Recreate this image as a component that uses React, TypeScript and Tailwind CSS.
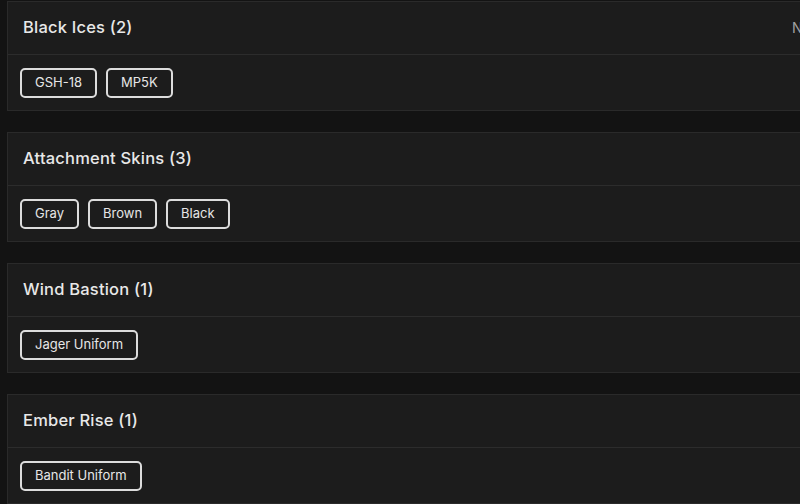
import React from "react";

type Group = {
  title: string;
  items: string[];
  note?: string;
};

const groups: Group[] = [
  { title: "Black Ices (2)", items: ["GSH-18", "MP5K"], note: "Not owned" },
  { title: "Attachment Skins (3)", items: ["Gray", "Brown", "Black"] },
  { title: "Wind Bastion (1)", items: ["Jager Uniform"] },
  { title: "Ember Rise (1)", items: ["Bandit Uniform"] },
];

function GroupCard({ group }: { group: Group }) {
  return (
    <section className="w-[900px] bg-[#1c1c1c] border border-[#2a2a2a]">
      {/* Header */}
      <div className="flex items-center h-[53px] pl-[15px] pr-4 pb-[1px] border-b border-[#2c2c2c]">
        <h3 className="flex-1 text-[16.5px] font-medium text-[#e8e8e8] tracking-[0.2px]">
          {group.title}
        </h3>
        {group.note && (
          <span className="w-[98px] text-[14px] text-[#a0a0a0]">{group.note}</span>
        )}
      </div>

      {/* Items */}
      <div className="flex items-center gap-[9px] h-[55px] px-3">
        {group.items.map((item) => (
          <span
            key={item}
            className="flex items-center h-[30px] px-[13px] rounded-[5px] border-2 border-[#dcdcdc] text-[13px] text-[#e6e6e6]"
          >
            {item}
          </span>
        ))}
      </div>
    </section>
  );
}

export default function App() {
  return (
    <div
      className="w-[800px] h-[504px] overflow-hidden bg-[#131313] pl-[7px] pt-[1px]"
      style={{ fontFamily: 'Inter, "Noto Sans", sans-serif' }}
    >
      <div className="flex flex-col gap-[21px]">
        {groups.map((g) => (
          <GroupCard key={g.title} group={g} />
        ))}
      </div>
    </div>
  );
}
